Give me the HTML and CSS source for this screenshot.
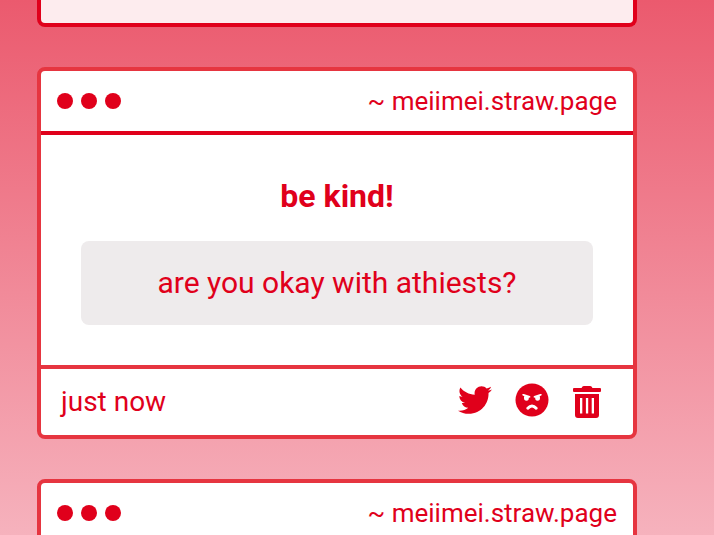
FILE: index.html
```html
<!DOCTYPE html>
<html lang="en">
<head>
<meta charset="utf-8">
<meta name="viewport" content="width=device-width, initial-scale=1">
<title>meiimei.straw.page</title>
<link rel="stylesheet" href="styles.css">
</head>
<body>
<main class="feed">
  <article class="card card-previous"></article>

  <article class="card">
    <header class="card-header">
      <div class="dots"><span class="dot"></span><span class="dot"></span><span class="dot"></span></div>
      <a class="site" href="#">~ meiimei.straw.page</a>
    </header>
    <div class="card-body">
      <h2 class="prompt">be kind!</h2>
      <p class="message">are you okay with athiests?</p>
    </div>
    <footer class="card-footer">
      <time class="time">just now</time>
      <div class="actions">
        <button class="action" type="button" aria-label="Share on Twitter">
          <svg class="icon" viewBox="0 0 512 512" aria-hidden="true"><path d="M459.37 151.716c.325 4.548.325 9.097.325 13.645 0 138.72-105.583 298.558-298.558 298.558-59.452 0-114.68-17.219-161.137-47.106 8.447.974 16.568 1.299 25.34 1.299 49.055 0 94.213-16.568 130.274-44.832-46.132-.975-84.792-31.188-98.112-72.772 6.498.974 12.995 1.624 19.818 1.624 9.421 0 18.843-1.3 27.614-3.573-48.081-9.747-84.143-51.98-84.143-102.985v-1.299c13.969 7.797 30.214 12.67 47.431 13.319-28.264-18.843-46.781-51.005-46.781-87.391 0-19.492 5.197-37.36 14.294-52.954 51.655 63.675 129.3 105.258 216.365 109.807-1.624-7.797-2.599-15.918-2.599-24.04 0-57.828 46.782-104.934 104.934-104.934 30.213 0 57.502 12.67 76.67 33.137 23.715-4.548 46.456-13.32 66.599-25.34-7.798 24.366-24.366 44.833-46.132 57.827 21.117-2.273 41.584-8.122 60.426-16.243-14.292 20.791-32.161 39.308-52.628 54.253z"/></svg>
        </button>
        <button class="action" type="button" aria-label="Report">
          <svg class="icon" viewBox="-1 0 34 34" aria-hidden="true"><circle cx="17" cy="17" r="16.5"/><path class="cutout" d="M7.2 11.5Q7.5 10.6 8.8 11L14.8 12.9Q16 13.6 15.2 14.6L13.8 14.7Q14 17.6 11.5 17.8Q8.8 17.8 9 14.5L9.3 13.3L7.8 12.5Q7 12.1 7.2 11.5ZM26.8 11.5Q26.5 10.6 25.2 11L19.2 12.9Q18 13.6 18.8 14.6L20.2 14.7Q20 17.6 22.5 17.8Q25.2 17.8 25 14.5L24.7 13.3L26.2 12.5Q27 12.1 26.8 11.5Z"/><path class="frown" d="M12.8 25.2Q17 20.6 21.2 25.2"/></svg>
        </button>
        <button class="action" type="button" aria-label="Delete">
          <svg class="icon" viewBox="0 0 34 34" aria-hidden="true"><path fill-rule="evenodd" d="M4 5H11.5L12.5 3.6Q13 3 13.8 3H20.2Q21 3 21.5 3.6L22.5 5H30Q31 5 31 6V8Q31 9 30 9H4Q3 9 3 8V6Q3 5 4 5ZM5 11H29V32Q29 35 26 35H8Q5 35 5 32ZM10 15V30.5H12.3V15ZM15.9 15V30.5H18.2V15ZM21.7 15V30.5H24V15Z"/></svg>
        </button>
      </div>
    </footer>
  </article>

  <article class="card">
    <header class="card-header">
      <div class="dots"><span class="dot"></span><span class="dot"></span><span class="dot"></span></div>
      <a class="site" href="#">~ meiimei.straw.page</a>
    </header>
  </article>
</main>
</body>
</html>
```
FILE: styles.css
```css
* {
  box-sizing: border-box;
}

html {
  height: 100%;
  overflow: hidden;
}

body {
  min-height: 100%;
  margin: 0;
  background: linear-gradient(#eb5a6e, #f6b2bd);
  color: #e0001b;
  font-family: Roboto, "Liberation Sans", sans-serif;
}

.feed {
  display: flex;
  flex-direction: column;
  gap: 40px;
  height: 100vh;
  overflow: hidden;
  padding: 0 77px 0 37px;
}

.card {
  flex: none;
  overflow: hidden;
  border: 4px solid #e63540;
  border-radius: 8px;
  background: #fff;
}

.card-previous {
  height: 27px;
  border-color: #e0001b;
  border-top: 0;
  border-radius: 0 0 8px 8px;
  background: #fdecee;
}

.card-header {
  display: flex;
  align-items: center;
  justify-content: space-between;
  padding: 14px 16px;
  border-bottom: 4px solid #e0001b;
}

.dots {
  display: flex;
  gap: 8px;
}

.dot {
  width: 16px;
  height: 16px;
  border-radius: 50%;
  background: #e0001b;
}

.site {
  color: inherit;
  font-size: 26px;
  line-height: 32px;
  text-decoration: none;
}

.card-body {
  padding: 40px;
}

.prompt {
  margin: 0 0 24px;
  font-size: 32px;
  font-weight: 700;
  line-height: 42px;
  text-align: center;
}

.message {
  margin: 0;
  padding: 22px 20px;
  border-radius: 8px;
  background: #eeebec;
  font-size: 30px;
  line-height: 40px;
  text-align: center;
}

.card-footer {
  display: flex;
  align-items: center;
  justify-content: space-between;
  padding: 14px 29px 14px 20px;
  border-top: 4px solid #e63540;
}

.time {
  font-size: 28px;
  line-height: 38px;
}

.actions {
  display: flex;
  gap: 22px;
  padding-bottom: 4px;
}

.action {
  display: flex;
  padding: 0;
  border: 0;
  background: none;
  color: inherit;
  cursor: pointer;
}

.icon {
  width: 34px;
  height: 34px;
  overflow: visible;
  fill: currentColor;
}

.cutout {
  fill: #fff;
}

.frown {
  fill: none;
  stroke: #fff;
  stroke-width: 3;
  stroke-linecap: round;
}
```
